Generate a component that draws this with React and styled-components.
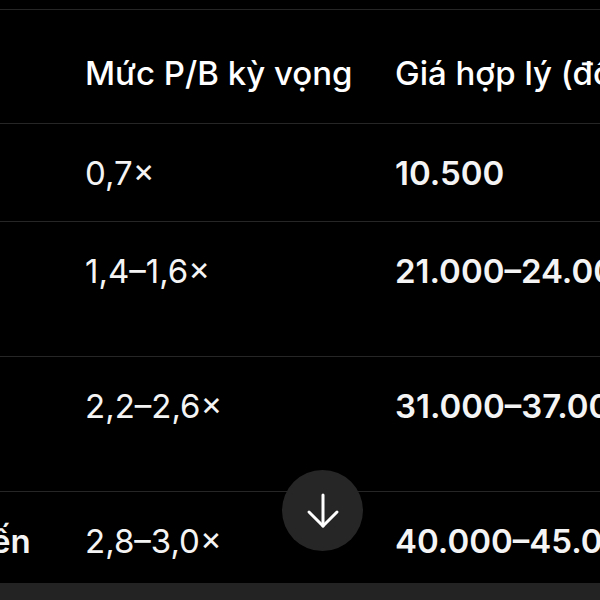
import styled, { createGlobalStyle } from "styled-components";

const GlobalStyle = createGlobalStyle`
  html, body {
    margin: 0;
    padding: 0;
    background: #000;
  }
  body {
    font-family: Inter, "Noto Sans", "Liberation Sans", sans-serif;
    color: #fff;
  }
`;

const Page = styled.div`
  position: relative;
  width: 600px;
  height: 600px;
  display: flex;
  flex-direction: column;
  background: #000;
  overflow: hidden;
`;

const Scroller = styled.div`
  height: 583px;
  overflow: hidden;
  padding-top: 9px;
  box-sizing: border-box;
`;

const Table = styled.table`
  margin-left: -320px;
  width: 1385px;
  table-layout: fixed;
  border-collapse: collapse;
  border-top: 1px solid #262626;
  font-size: 33px;
  line-height: 37px;
`;

const HeadCell = styled.th`
  text-align: left;
  font-weight: 500;
  padding: 45px 20px 31px;
  vertical-align: top;
  border-bottom: 1px solid #262626;
  white-space: nowrap;
`;

const Cell = styled.td`
  padding: 31px 20px 29px;
  vertical-align: top;
  border-bottom: 1px solid #262626;
  font-weight: ${(p) => (p.$bold ? 600 : 400)};
  color: #f4f4f4;
  white-space: nowrap;
`;

const Line = styled.div`
  white-space: nowrap;
`;

const Composer = styled.div`
  flex: 1;
  background: #232323;
`;

const JumpButton = styled.button`
  position: absolute;
  left: 282px;
  top: 470px;
  width: 81px;
  height: 81px;
  border-radius: 50%;
  border: none;
  background: #262626;
  display: flex;
  align-items: center;
  justify-content: center;
  padding: 0;
  cursor: pointer;
`;

const rows = [
  { name: "Bi quan", pb: "0,7×", price: "10.500", note: ["Thị trường khó khăn"] },
  { name: "Cơ sở", pb: "1,4–1,6×", price: "21.000–24.000", note: ["ROE phục hồi", "về trung bình"] },
  { name: "Lạc quan", pb: "2,2–2,6×", price: "31.000–37.000", note: ["Lợi nhuận tăng", "ổn định"] },
  { name: "Tăng trưởng đột biến", pb: "2,8–3,0×", price: "40.000–45.000", note: ["Chu kỳ tăng mạnh"] },
];

const App = () => {
  return (
    <Page>
      <GlobalStyle />
      <Scroller>
        <Table>
          <colgroup>
            <col style={{ width: 385 }} />
            <col style={{ width: 310 }} />
            <col style={{ width: 340 }} />
            <col style={{ width: 350 }} />
          </colgroup>
          <thead>
            <tr>
              <HeadCell>Kịch bản</HeadCell>
              <HeadCell>Mức P/B kỳ vọng</HeadCell>
              <HeadCell>Giá hợp lý (đồng)</HeadCell>
              <HeadCell>Giả định</HeadCell>
            </tr>
          </thead>
          <tbody>
            {rows.map((r) => (
              <tr key={r.name}>
                <Cell $bold>{r.name}</Cell>
                <Cell>{r.pb}</Cell>
                <Cell $bold>{r.price}</Cell>
                <Cell>
                  {r.note.map((l) => (
                    <Line key={l}>{l}</Line>
                  ))}
                </Cell>
              </tr>
            ))}
          </tbody>
        </Table>
      </Scroller>
      <Composer />
      <JumpButton aria-label="Cuộn xuống">
        <svg width="34" height="36" viewBox="0 0 34 36" fill="none" stroke="#fff" strokeWidth="3" strokeLinecap="round" strokeLinejoin="round">
          <path d="M17 2v31" />
          <path d="M3 19l14 14 14-14" />
        </svg>
      </JumpButton>
    </Page>
  );
};

export default App;
